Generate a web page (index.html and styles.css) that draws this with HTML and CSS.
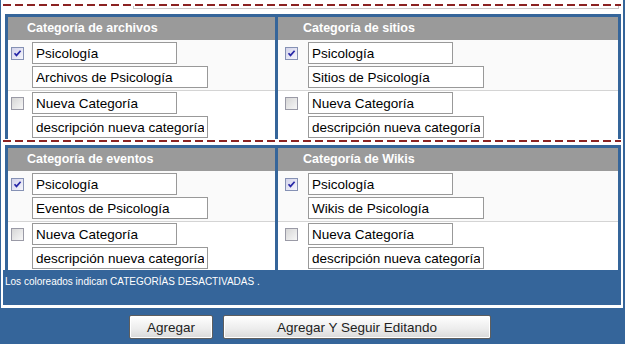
FILE: index.html
```html
<!DOCTYPE html>
<html lang="es">
<head>
  <meta charset="UTF-8" />
  <meta name="viewport" content="width=device-width, initial-scale=1.0"/>
  <title>Categorías</title>
  <link rel="stylesheet" href="styles.css">
</head>
<body>
  <div class="frame">
    <div class="section first">
      <div class="dash"></div>
      <div class="prev-box"></div>
      <div class="cats">
        <div class="cat narrow">
          <div class="cat-head">Categoría de archivos</div>
          <div class="cat-row shaded">
            <span class="check on"><svg viewBox="0 0 11 11"><path d="M2.5 5.2 L4.5 7.4 L8.6 2.8"/></svg></span>
            <div class="fields">
              <input type="text" class="name" value="Psicología">
              <input type="text" class="desc" value="Archivos de Psicología">
            </div>
          </div>
          <div class="cat-row">
            <span class="check"></span>
            <div class="fields">
              <input type="text" class="name" value="Nueva Categoría">
              <input type="text" class="desc" value="descripción nueva categoría">
            </div>
          </div>
        </div>
        <div class="cat wide">
          <div class="cat-head">Categoría de sitios</div>
          <div class="cat-row shaded">
            <span class="check on"><svg viewBox="0 0 11 11"><path d="M2.5 5.2 L4.5 7.4 L8.6 2.8"/></svg></span>
            <div class="fields">
              <input type="text" class="name" value="Psicología">
              <input type="text" class="desc" value="Sitios de Psicología">
            </div>
          </div>
          <div class="cat-row">
            <span class="check"></span>
            <div class="fields">
              <input type="text" class="name" value="Nueva Categoría">
              <input type="text" class="desc" value="descripción nueva categoría">
            </div>
          </div>
        </div>
      </div>
    </div>

    <div class="section second">
      <div class="dash"></div>
      <div class="cats">
        <div class="cat narrow">
          <div class="cat-head">Categoría de eventos</div>
          <div class="cat-row shaded">
            <span class="check on"><svg viewBox="0 0 11 11"><path d="M2.5 5.2 L4.5 7.4 L8.6 2.8"/></svg></span>
            <div class="fields">
              <input type="text" class="name" value="Psicología">
              <input type="text" class="desc" value="Eventos de Psicología">
            </div>
          </div>
          <div class="cat-row">
            <span class="check"></span>
            <div class="fields">
              <input type="text" class="name" value="Nueva Categoría">
              <input type="text" class="desc" value="descripción nueva categoría">
            </div>
          </div>
        </div>
        <div class="cat wide">
          <div class="cat-head">Categoría de Wikis</div>
          <div class="cat-row shaded">
            <span class="check on"><svg viewBox="0 0 11 11"><path d="M2.5 5.2 L4.5 7.4 L8.6 2.8"/></svg></span>
            <div class="fields">
              <input type="text" class="name" value="Psicología">
              <input type="text" class="desc" value="Wikis de Psicología">
            </div>
          </div>
          <div class="cat-row">
            <span class="check"></span>
            <div class="fields">
              <input type="text" class="name" value="Nueva Categoría">
              <input type="text" class="desc" value="descripción nueva categoría">
            </div>
          </div>
        </div>
      </div>
    </div>

    <p class="legend">Los coloreados indican CATEGORÍAS DESACTIVADAS .</p>
  </div>

  <div class="actions">
    <button type="submit" class="btn-add">Agregar</button>
    <button type="submit" class="btn-more">Agregar Y Seguir Editando</button>
  </div>
</body>
</html>
```

FILE: styles.css
```css
body {
  margin: 0;
  background-color: #35659a;
  font-family: "Liberation Sans", Arial, sans-serif;
}
.frame {
  margin-left: 1px;
  width: 618px;
  border: 2px solid #fff;
  border-top: 0;
  border-bottom-width: 3px;
  background-color: #35659a;
}
.section {
  background-color: #fff;
}
.first {
  padding-top: 4px;
}
.second {
  padding-top: 1px;
}
.dash {
  height: 2px;
  background: repeating-linear-gradient(90deg, #8b2222 0 8px, transparent 8px 12px);
}
.prev-box {
  margin-left: 130px;
  width: 484px;
  height: 2px;
  border: 1px solid #c8c8c8;
  border-top: 0;
}
.first .cats {
  margin-top: 5px;
}
.second .cats {
  margin-top: 3px;
}
.cats {
  display: grid;
  grid-template-columns: 267px 1fr;
  gap: 3px;
  padding: 3px 3px 0;
  margin-left: 2px;
  background-color: #35659a;
}
.cat {
  background-color: #fff;
}
.narrow {
  --check: 24px;
  --check-left: 3px;
}
.wide {
  --check: 30px;
  --check-left: 7px;
}
.cat-head {
  height: 23px;
  line-height: 23px;
  padding-left: calc(var(--check) - 5px);
  background-color: #9a9a9a;
  color: #fff;
  font-weight: bold;
  font-size: 12.5px;
}
.cat-row {
  display: flex;
  padding: 2px 0;
}
.cat-row + .cat-row {
  border-top: 1px solid #d4d4d4;
  padding: 1px 0;
}
.shaded {
  background-color: #fafafa;
}
.check {
  box-sizing: border-box;
  width: 13px;
  height: 13px;
  margin: 5px calc(var(--check) - var(--check-left) - 13px) 0 var(--check-left);
  flex-shrink: 0;
  border: 1px solid #9a9aa6;
  background: linear-gradient(135deg, #d6d6d6, #f7f7f7);
}
.check.on {
  border-color: #8591b4;
  background: linear-gradient(135deg, #d2d2ea, #f6f6fc);
}
.check svg {
  display: block;
  width: 11px;
  height: 11px;
}
.check path {
  fill: none;
  stroke: #2727a8;
  stroke-width: 1.7;
}
.fields {
  display: flex;
  flex-direction: column;
  gap: 2px;
}
.fields input {
  box-sizing: border-box;
  height: 22px;
  margin: 0;
  padding: 0 3px;
  border: 1px solid #999;
  background-color: #fff;
  color: #000;
  font-family: "Liberation Sans", Arial, sans-serif;
  font-size: 13.5px;
}
.fields .name {
  width: 145px;
}
.fields .desc {
  width: 176px;
}
.legend {
  margin: 0;
  height: 35px;
  box-sizing: border-box;
  padding: 6px 2px 0;
  color: #fff;
  font-size: 10px;
}
.actions {
  display: flex;
  justify-content: center;
  gap: 10px;
  margin-top: 7px;
  padding-right: 5px;
}
.actions button {
  height: 24px;
  border: 1px solid #5e5e5e;
  border-radius: 2px;
  background: linear-gradient(#ffffff, #ececec 60%, #d9d9d9);
  box-shadow: inset 0 0 0 1px #fff;
  color: #222;
  font-family: "Liberation Sans", Arial, sans-serif;
  font-size: 13.5px;
}
.btn-add {
  width: 84px;
}
.btn-more {
  width: 268px;
}
```
